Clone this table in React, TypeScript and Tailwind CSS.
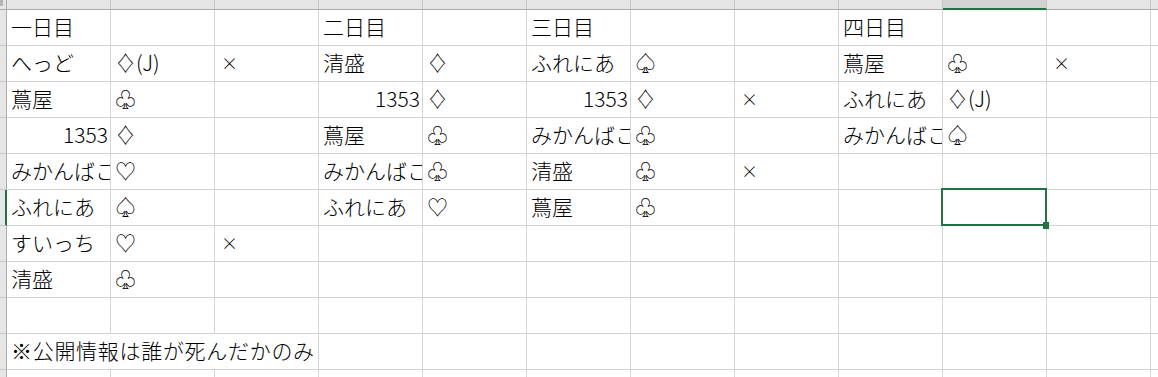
const COLS = ['A', 'B', 'C', 'D', 'E', 'F', 'G', 'H', 'I', 'J', 'K']

type Cell = { v: string; right?: boolean; clip?: boolean; span?: number }

// sheet contents, keyed by row then column letter
const sheet: Record<string, Cell>[] = [
  { A: { v: '一日目' }, D: { v: '二日目' }, F: { v: '三日目' }, I: { v: '四日目' } },
  {
    A: { v: 'へっど' },
    B: { v: '♢(J)' },
    C: { v: '×' },
    D: { v: '清盛' },
    E: { v: '♢' },
    F: { v: 'ふれにあ' },
    G: { v: '♤' },
    I: { v: '蔦屋' },
    J: { v: '♧' },
    K: { v: '×' },
  },
  {
    A: { v: '蔦屋' },
    B: { v: '♧' },
    D: { v: '1353', right: true },
    E: { v: '♢' },
    F: { v: '1353', right: true },
    G: { v: '♢' },
    H: { v: '×' },
    I: { v: 'ふれにあ' },
    J: { v: '♢(J)' },
  },
  {
    A: { v: '1353', right: true },
    B: { v: '♢' },
    D: { v: '蔦屋' },
    E: { v: '♧' },
    F: { v: 'みかんばこ', clip: true },
    G: { v: '♧' },
    I: { v: 'みかんばこ', clip: true },
    J: { v: '♤' },
  },
  {
    A: { v: 'みかんばこ', clip: true },
    B: { v: '♡' },
    D: { v: 'みかんばこ', clip: true },
    E: { v: '♧' },
    F: { v: '清盛' },
    G: { v: '♧' },
    H: { v: '×' },
  },
  {
    A: { v: 'ふれにあ' },
    B: { v: '♤' },
    D: { v: 'ふれにあ' },
    E: { v: '♡' },
    F: { v: '蔦屋' },
    G: { v: '♧' },
  },
  { A: { v: 'すいっち' }, B: { v: '♡' }, C: { v: '×' } },
  { A: { v: '清盛' }, B: { v: '♧' } },
  {},
  { A: { v: '※公開情報は誰が死んだかのみ', span: 3 } },
]

const SEL_ROW = 5
const SEL_COL = 'J'

function DataCell({ cell, selected }: { cell?: Cell; selected: boolean }) {
  const span = cell?.span ?? 1
  let text: React.ReactNode = null
  if (cell) {
    if (cell.v === '×') text = <span className="ml-[2px] text-[17px]">×</span>
    else
      text = (
        <span className={`whitespace-nowrap ${span === 3 ? 'tracking-[0.7px]' : ''}`}>{cell.v}</span>
      )
  }
  return (
    <div
      className={`relative flex items-center border-r border-b border-[#d4d4d4] pb-[2px] ${
        span === 3 ? 'col-span-3' : ''
      } ${cell?.right ? 'justify-end pr-[2px]' : 'pl-[4px]'} ${cell?.clip ? 'overflow-hidden' : ''}`}
    >
      {text}
      {selected && (
        <div className="absolute z-10 -top-[2px] -left-[2px] -right-[1px] -bottom-[1px] border-2 border-[#217346]">
          <div className="absolute -right-[4px] -bottom-[5px] h-[7px] w-[6px] bg-[#217346]" />
        </div>
      )}
    </div>
  )
}

export default function App() {
  return (
    <div
      className="grid h-[377px] w-[1158px] overflow-hidden bg-white text-[21px] font-light leading-none text-black grid-cols-[7px_repeat(11,104px)_1fr] grid-rows-[10px_repeat(10,36px)_1fr]"
      style={{ fontFamily: '"Noto Sans CJK JP", "Noto Sans", sans-serif' }}
    >
      {/* column header strip */}
      <div className="relative border-r border-b border-[#ababab] bg-[#e6e6e6]">
        <div className="absolute top-0 left-0 h-[6px] w-[3px] bg-[#b5b5b5]" />
      </div>
      {COLS.map((c) => (
        <div
          key={c}
          className={
            c === SEL_COL
              ? 'border-r border-[#c6c6c6] border-b-2 border-b-[#217346] bg-[#d2d2d2]'
              : 'border-r border-b border-[#c6c6c6] border-b-[#ababab] bg-[#e6e6e6]'
          }
        />
      ))}
      <div className="border-b border-[#ababab] bg-[#e6e6e6]" />

      {sheet.map((row, r) => {
        const cells: React.ReactNode[] = []
        let skip = 0
        COLS.forEach((c) => {
          if (skip > 0) {
            skip--
            return
          }
          const cell = row[c]
          if (cell?.span) skip = cell.span - 1
          cells.push(<DataCell key={c} cell={cell} selected={r === SEL_ROW && c === SEL_COL} />)
        })
        return (
          <div key={r} className="contents">
            <div
              className={`border-b border-[#c6c6c6] bg-[#e6e6e6] ${
                r === SEL_ROW ? 'border-r-2 border-r-[#217346] bg-[#d2d2d2]' : 'border-r border-r-[#ababab]'
              }`}
            />
            {cells}
            <div className="border-b border-[#d4d4d4]" />
          </div>
        )
      })}

      {/* partial row at the bottom edge */}
      <div className="border-r border-[#ababab] bg-[#e6e6e6]" />
      {COLS.map((c) => (
        <div key={c} className="border-r border-[#d4d4d4]" />
      ))}
      <div />
    </div>
  )
}
